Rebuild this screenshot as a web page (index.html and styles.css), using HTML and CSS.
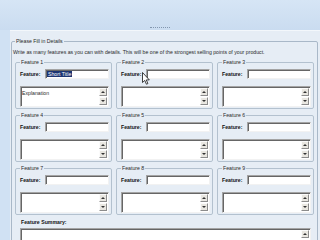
FILE: index.html
```html
<!DOCTYPE html>
<html lang="en">
<head>
    <meta charset="UTF-8">
    <title>Feature Details</title>
    <link rel="stylesheet" href="styles.css">
</head>
<body>
    <!-- window top strip -->
    <div class="top">
        <div class="grip"></div>
    </div>

    <div class="panel">
        <fieldset class="details">
            <legend>Please Fill in Details</legend>
            <p class="intro">Write as many features as you can with details. This will be one of the strongest selling points of your product.</p>

            <div class="features">
                <fieldset class="feature">
                    <legend>Feature 1</legend>
                    <div class="row"><label>Feature:</label><div class="input"><span class="sel">Short Title</span></div></div>
                    <div class="area"><span class="txt">Explanation</span><div class="scroll"><span class="btn up"></span><span class="btn down"></span></div></div>
                </fieldset>
                <fieldset class="feature">
                    <legend>Feature 2</legend>
                    <div class="row"><label>Feature:</label><div class="input"></div></div>
                    <div class="area"><span class="txt"></span><div class="scroll"><span class="btn up"></span><span class="btn down"></span></div></div>
                </fieldset>
                <fieldset class="feature">
                    <legend>Feature 3</legend>
                    <div class="row"><label>Feature:</label><div class="input"></div></div>
                    <div class="area"><span class="txt"></span><div class="scroll"><span class="btn up"></span><span class="btn down"></span></div></div>
                </fieldset>
                <fieldset class="feature">
                    <legend>Feature 4</legend>
                    <div class="row"><label>Feature:</label><div class="input"></div></div>
                    <div class="area"><span class="txt"></span><div class="scroll"><span class="btn up"></span><span class="btn down"></span></div></div>
                </fieldset>
                <fieldset class="feature">
                    <legend>Feature 5</legend>
                    <div class="row"><label>Feature:</label><div class="input"></div></div>
                    <div class="area"><span class="txt"></span><div class="scroll"><span class="btn up"></span><span class="btn down"></span></div></div>
                </fieldset>
                <fieldset class="feature">
                    <legend>Feature 6</legend>
                    <div class="row"><label>Feature:</label><div class="input"></div></div>
                    <div class="area"><span class="txt"></span><div class="scroll"><span class="btn up"></span><span class="btn down"></span></div></div>
                </fieldset>
                <fieldset class="feature">
                    <legend>Feature 7</legend>
                    <div class="row"><label>Feature:</label><div class="input"></div></div>
                    <div class="area"><span class="txt"></span><div class="scroll"><span class="btn up"></span><span class="btn down"></span></div></div>
                </fieldset>
                <fieldset class="feature">
                    <legend>Feature 8</legend>
                    <div class="row"><label>Feature:</label><div class="input"></div></div>
                    <div class="area"><span class="txt"></span><div class="scroll"><span class="btn up"></span><span class="btn down"></span></div></div>
                </fieldset>
                <fieldset class="feature">
                    <legend>Feature 9</legend>
                    <div class="row"><label>Feature:</label><div class="input"></div></div>
                    <div class="area"><span class="txt"></span><div class="scroll"><span class="btn up"></span><span class="btn down"></span></div></div>
                </fieldset>
            </div>

            <!-- summary box -->
            <div class="summary">
                <label>Feature Summary:</label>
                <div class="area big"><span class="txt"></span><div class="scroll"><span class="btn up"></span></div></div>
            </div>
        </fieldset>
    </div>

    <!-- mouse pointer over Feature 2 -->
    <svg class="cursor" width="8" height="13" viewBox="0 0 8 13">
        <path d="M0.5 0.5 L0.5 10.5 L2.8 8.4 L4.4 12.2 L5.9 11.6 L4.3 7.9 L7.3 7.9 Z" fill="#fff" stroke="#111" stroke-width="0.8"/>
    </svg>
</body>
</html>
```

FILE: styles.css
```css
* {
    box-sizing: border-box;
}
body {
    margin: 0;
    width: 320px;
    height: 240px;
    overflow: hidden;
    position: relative;
    background: #d0e1f3;
    font-family: "Liberation Sans", Arial, sans-serif;
    font-size: 5.2px;
    color: #2a2a2a;
}

/* top strip */
.top {
    height: 30px;
    background: linear-gradient(#d6e5f5, #cadcf0);
    display: flex;
    justify-content: center;
    align-items: flex-end;
    padding-bottom: 2px;
}
.grip {
    width: 20px;
    border-top: 1px dotted #8296ae;
}

/* main panel */
.panel {
    margin-left: 10px;
    height: 210px;
    overflow: hidden;
    background: #e6edf5;
    border-top: 1px solid #f3f7fb;
    padding: 7px 2px 0 1px;
}
fieldset {
    margin: 0;
    min-width: 0;
    border-radius: 2px;
}
legend {
    padding: 0 1px;
    line-height: 6px;
    font-size: 5.2px;
}
.details {
    border: 1px solid #a9b8c8;
    padding: 0 2px 0 3px;
    height: 215px;
}
.intro {
    margin: 5px 0 4px -2px;
    line-height: 6px;
    white-space: nowrap;
}

/* feature grid */
.features {
    display: grid;
    grid-template-columns: repeat(3, 97px);
    column-gap: 4px;
    row-gap: 3px;
}
.feature {
    border: 1px solid #b3c1cf;
    padding: 0 2px 0 4px;
    height: 50px;
}
.row {
    display: flex;
    align-items: center;
    margin-top: 4px;
}
.row label,
.summary label {
    font-weight: bold;
    color: #111;
}
.row label {
    width: 25px;
    flex: none;
}
.input {
    flex: 1;
    height: 10px;
    background: #fff;
    border: 1px solid;
    border-color: #a4a4a4 #f2f2f2 #f2f2f2 #a4a4a4;
    box-shadow: inset 1px 1px #666;
    display: flex;
    align-items: center;
    padding-left: 1px;
}
.sel {
    background: #1c3472;
    color: #fff;
    line-height: 6px;
    padding: 0 1px;
    white-space: nowrap;
}

/* multi line boxes */
.area {
    margin-top: 7px;
    height: 21px;
    background: #fff;
    border: 1px solid;
    border-color: #a4a4a4 #f2f2f2 #f2f2f2 #a4a4a4;
    box-shadow: inset 1px 1px #666;
    display: flex;
}
.txt {
    flex: 1;
    padding: 3px 0 0 1px;
    line-height: 6px;
}
.scroll {
    width: 9px;
    padding: 1px 1px 1px 0;
    display: flex;
    flex-direction: column;
    justify-content: space-between;
}
.btn {
    height: 8px;
    background: #e9e7e1;
    border: 1px solid;
    border-color: #fbfbfb #8c8c8c #8c8c8c #fbfbfb;
    display: flex;
    justify-content: center;
    align-items: center;
}
.btn::after {
    content: "";
    border-left: 2px solid transparent;
    border-right: 2px solid transparent;
}
.up::after {
    border-bottom: 2px solid #333;
}
.down::after {
    border-top: 2px solid #333;
}

/* summary */
.summary {
    padding: 4px 4px 0 5px;
}
.summary label {
    display: block;
    line-height: 6px;
    padding-left: 1px;
}
.big {
    margin-top: 3px;
    height: 24px;
}
.big .scroll {
    justify-content: flex-start;
}

.cursor {
    position: absolute;
    left: 142px;
    top: 72px;
}
```
